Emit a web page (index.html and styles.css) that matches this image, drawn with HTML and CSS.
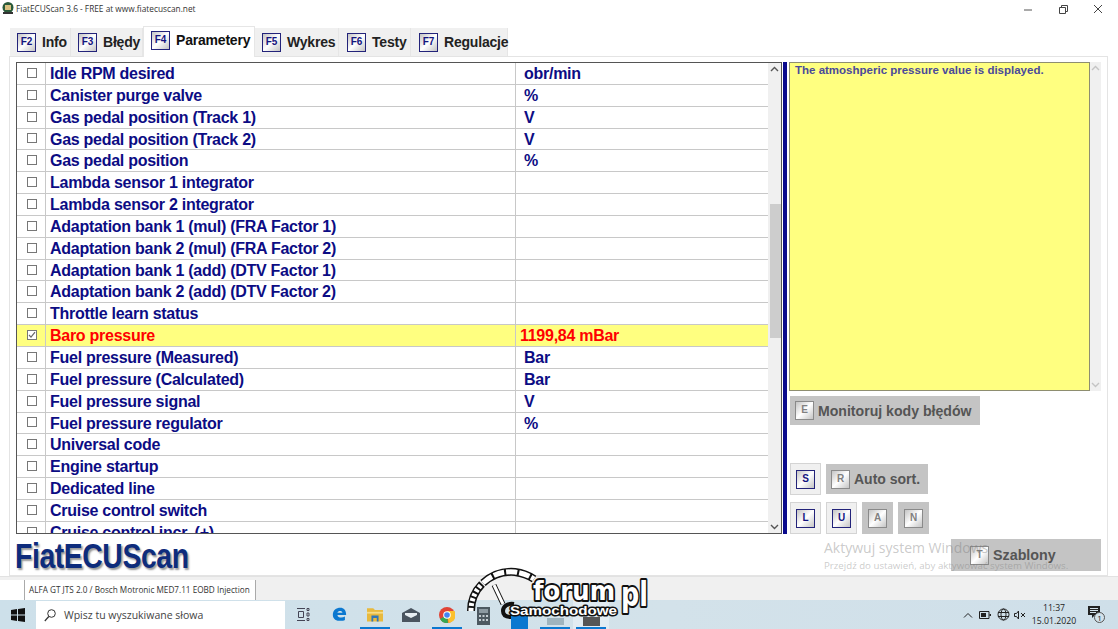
FILE: index.html
```html
<!DOCTYPE html>
<html lang="pl">
<head>
<meta charset="utf-8">
<title>FiatECUScan</title>
<link rel="stylesheet" href="styles.css">
</head>
<body>
<div class="window">
  <header class="titlebar">
    <svg class="appicon" width="12" height="12" viewBox="0 0 12 12"><circle cx="6" cy="5.500" r="5.500" fill="#2a5a3a"/><path d="M3 3h6v5H3z" fill="#d8c080"/><path d="M1 10h10v2H1z" fill="#333"/></svg>
    <span class="apptitle">FiatECUScan 3.6 - FREE at www.fiatecuscan.net</span>
    <div class="winctl">
      <svg width="11" height="11" viewBox="0 0 11 11"><path d="M1 6h8" stroke="#555" fill="none"/></svg>
      <svg width="11" height="11" viewBox="0 0 11 11"><path d="M1.500 3.500h6v6h-6zM3.500 3.500v-2h6v6h-2" stroke="#444" fill="none"/></svg>
      <svg width="11" height="11" viewBox="0 0 11 11"><path d="M1 1l8 8M9 1l-8 8" stroke="#444" fill="none"/></svg>
    </div>
  </header>

  <nav class="tabs">
    <div class="tab tab-info"><span class="key">F2</span>Info</div>
    <div class="tab tab-bledy"><span class="key">F3</span>Błędy</div>
    <div class="tab tab-active"><span class="key">F4</span>Parametery</div>
    <div class="tab tab-wykres"><span class="key">F5</span>Wykres</div>
    <div class="tab tab-testy"><span class="key">F6</span>Testy</div>
    <div class="tab tab-reg"><span class="key">F7</span>Regulacje</div>
  </nav>

  <main class="panel">
    <div class="left">
      <div class="table">
        <div class="rows">
          <div class="row"><span class="ck"><i class="box"></i></span><span class="nm">Idle RPM desired</span><span class="val">obr/min</span></div>
          <div class="row"><span class="ck"><i class="box"></i></span><span class="nm">Canister purge valve</span><span class="val">%</span></div>
          <div class="row"><span class="ck"><i class="box"></i></span><span class="nm">Gas pedal position (Track 1)</span><span class="val">V</span></div>
          <div class="row"><span class="ck"><i class="box"></i></span><span class="nm">Gas pedal position (Track 2)</span><span class="val">V</span></div>
          <div class="row"><span class="ck"><i class="box"></i></span><span class="nm">Gas pedal position</span><span class="val">%</span></div>
          <div class="row"><span class="ck"><i class="box"></i></span><span class="nm">Lambda sensor 1 integrator</span><span class="val"></span></div>
          <div class="row"><span class="ck"><i class="box"></i></span><span class="nm">Lambda sensor 2 integrator</span><span class="val"></span></div>
          <div class="row"><span class="ck"><i class="box"></i></span><span class="nm">Adaptation bank 1 (mul) (FRA Factor 1)</span><span class="val"></span></div>
          <div class="row"><span class="ck"><i class="box"></i></span><span class="nm">Adaptation bank 2 (mul) (FRA Factor 2)</span><span class="val"></span></div>
          <div class="row"><span class="ck"><i class="box"></i></span><span class="nm">Adaptation bank 1 (add) (DTV Factor 1)</span><span class="val"></span></div>
          <div class="row"><span class="ck"><i class="box"></i></span><span class="nm">Adaptation bank 2 (add) (DTV Factor 2)</span><span class="val"></span></div>
          <div class="row"><span class="ck"><i class="box"></i></span><span class="nm">Throttle learn status</span><span class="val"></span></div>
          <div class="row row-sel"><span class="ck"><i class="box box-on"><svg width="8" height="8" viewBox="0 0 8 8"><path d="M1 4l2 2.200 4-5" stroke="#666" stroke-width="1.200" fill="none"/></svg></i></span><span class="nm">Baro pressure</span><span class="val val-sel">1199,84 mBar</span></div>
          <div class="row"><span class="ck"><i class="box"></i></span><span class="nm">Fuel pressure (Measured)</span><span class="val">Bar</span></div>
          <div class="row"><span class="ck"><i class="box"></i></span><span class="nm">Fuel pressure (Calculated)</span><span class="val">Bar</span></div>
          <div class="row"><span class="ck"><i class="box"></i></span><span class="nm">Fuel pressure signal</span><span class="val">V</span></div>
          <div class="row"><span class="ck"><i class="box"></i></span><span class="nm">Fuel pressure regulator</span><span class="val">%</span></div>
          <div class="row"><span class="ck"><i class="box"></i></span><span class="nm">Universal code</span><span class="val"></span></div>
          <div class="row"><span class="ck"><i class="box"></i></span><span class="nm">Engine startup</span><span class="val"></span></div>
          <div class="row"><span class="ck"><i class="box"></i></span><span class="nm">Dedicated line</span><span class="val"></span></div>
          <div class="row"><span class="ck"><i class="box"></i></span><span class="nm">Cruise control switch</span><span class="val"></span></div>
          <div class="row"><span class="ck"><i class="box"></i></span><span class="nm">Cruise control incr. (+)</span><span class="val"></span></div>
        </div>
        <div class="scroll">
          <svg class="arrow" width="9" height="6" viewBox="0 0 9 6"><path d="M1 5l3.500-3.500L8 5" stroke="#555" stroke-width="1.400" fill="none"/></svg>
          <div class="track"><div class="thumb"></div></div>
          <svg class="arrow" width="9" height="6" viewBox="0 0 9 6"><path d="M1 1l3.500 3.500L8 1" stroke="#555" stroke-width="1.400" fill="none"/></svg>
        </div>
      </div>
      <div class="logo"><span class="logotext">FiatECUScan</span></div>
    </div>

    <div class="divider"></div>

    <aside class="right">
      <div class="descwrap">
        <div class="desc">The atmoshperic pressure value is displayed.</div>
        <div class="descscroll">
          <svg width="9" height="6" viewBox="0 0 9 6"><path d="M1 5l3.500-3.500L8 5" stroke="#c4c4c4" stroke-width="1.400" fill="none"/></svg>
          <svg width="9" height="6" viewBox="0 0 9 6"><path d="M1 1l3.500 3.500L8 1" stroke="#c4c4c4" stroke-width="1.400" fill="none"/></svg>
        </div>
      </div>
      <div class="btn btn-mon"><span class="key key-off">E</span>Monitoruj kody błędów</div>
      <div class="tools">
        <div class="toolrow">
          <div class="sq sq-on"><span class="key">S</span></div>
          <div class="btn btn-auto"><span class="key key-off">R</span>Auto sort.</div>
        </div>
        <div class="toolrow">
          <div class="sq sq-on"><span class="key">L</span></div>
          <div class="sq sq-on"><span class="key">U</span></div>
          <div class="sq"><span class="key key-off">A</span></div>
          <div class="sq"><span class="key key-off">N</span></div>
        </div>
      </div>
      <div class="btn btn-szab"><span class="key key-off">T</span>Szablony</div>
    </aside>
  </main>

  <footer class="status">
    <div class="stat-empty"></div>
    <div class="stat-text">ALFA GT JTS 2.0 / Bosch Motronic MED7.11 EOBD Injection</div>
  </footer>

  <div class="taskbar">
    <svg class="winlogo" width="14" height="14" viewBox="0 0 14 14"><path d="M0 2l6-1v5.500H0zM7 .9L14 0v6.500H7zM0 7.500h6V13l-6-1zM7 7.500h7V14l-7-1z" fill="#111"/></svg>
    <div class="search">
      <svg width="12" height="13" viewBox="0 0 12 13"><circle cx="7.500" cy="4.500" r="3.800" stroke="#333" fill="none"/><path d="M4.800 7.500L.8 12" stroke="#333" stroke-width="1.200"/></svg>
      <span>Wpisz tu wyszukiwane słowa</span>
    </div>
    <div class="taskicons">
      <div class="ti"><svg width="13" height="13" viewBox="0 0 13 13"><path d="M0 .5h8M0 12.500h8M1.500 3.500h5v6h-5zM10 .5h2v2h-2zM10 5h2v3h-2zM10 10.500h2v2h-2z" stroke="#445" fill="none"/></svg></div>
      <div class="ti"><svg width="15" height="15" viewBox="0 0 18 18"><path d="M1 9.500C1 4 5 1 10 1c4 0 7 3 7 8.500H6.500c.3 3.500 5.500 4 9 2v4c-4 2-14.500 2-14.500-6zM6.500 7h6c0-3-5.500-3-6 0z" fill="#0b78d0"/></svg></div>
      <div class="ti ti-run"><svg width="16" height="15" viewBox="0 0 18 16"><path d="M0 1h7l2 2h9v13H0z" fill="#e8b93e"/><path d="M0 5h18v2H0z" fill="#f6dc88"/><path d="M5 9h8v7h-2v-4H7v4H5z" fill="#2f76b8"/></svg></div>
      <div class="ti"><svg width="18" height="14" viewBox="0 0 18 14"><path d="M0 5L9 0l9 5v9H0z" fill="#4a5560"/><path d="M3 5h12v2L9 10 3 7z" fill="#e7eef2"/></svg></div>
      <div class="ti ti-run"><svg width="16" height="16" viewBox="0 0 16 16"><circle cx="8" cy="8" r="8" fill="#e04436"/><path d="M8 8L1 12a8 8 0 0 0 8 4z" fill="#35a853"/><path d="M8 4h7.500a8 8 0 0 1-6 12z" fill="#fbc02d"/><circle cx="8" cy="8" r="3.800" fill="#fff"/><circle cx="8" cy="8" r="2.800" fill="#4285f4"/></svg></div>
      <div class="ti"><svg class="calc" width="13" height="18" viewBox="0 0 13 18"><path d="M0 0h13v18H0z" fill="#4d5961"/><path d="M2 2h9v4H2z" fill="#8d9aa2"/><path d="M2 8h2v2H2zM5.500 8h2v2h-2zM9 8h2v2H9zM2 12h2v2H2zM5.500 12h2v2h-2zM9 12h2v2H9z" fill="#c5ced3"/></svg></div>
      <div class="ti"><div class="tile"></div></div>
      <div class="ti ti-run"><div class="tile tile-b"></div></div>
      <div class="ti ti-run ti-act"><div class="tile tile-c"></div></div>
    </div>
    <div class="tray">
      <svg width="10" height="6" viewBox="0 0 10 6"><path d="M1 5.500l4-4 4 4" stroke="#222" fill="none"/></svg>
      <svg width="12" height="8" viewBox="0 0 12 8"><path d="M.5.500h9.500v7H.5z" stroke="#222" fill="none"/><path d="M2 2h5v4H2z" fill="#222"/><path d="M10.500 3h1.500v2h-1.500z" fill="#222"/></svg>
      <svg width="13" height="13" viewBox="0 0 13 13"><circle cx="6.500" cy="6.500" r="5.500" stroke="#222" fill="none"/><ellipse cx="6.500" cy="6.500" rx="2.500" ry="5.500" stroke="#222" fill="none"/><path d="M1 4.500h11M1 8.500h11" stroke="#222"/></svg>
      <svg class="t-spk" width="12" height="10" viewBox="0 0 12 10"><path d="M.5 3.500h2l2-2.500v8l-2-2.500h-2z" stroke="#222" fill="none"/><path d="M7 3l4 4M11 3L7 7" stroke="#222"/></svg>
      <div class="clock"><span>11:37</span><span>15.01.2020</span></div>
      <div class="notif">
        <svg width="13" height="13" viewBox="0 0 13 13"><path d="M0 0h12v9H7l-3 3V9H0z" fill="#222"/><path d="M2 2.500h8M2 4.500h8M2 6.500h6" stroke="#d3e1ea"/></svg>
        <span class="badge">1</span>
      </div>
    </div>
  </div>

  <svg class="forumlogo" width="190" height="56" viewBox="0 0 190 56">
    <path class="arc-o" d="M6 47C6 36 10 27 17 20"/>
    <path class="arc-o" d="M18 19C28 10 38 7 50 8c7 1 13 3 19 7"/>
    <path class="arc-ti" d="M6 47C6 36 10 27 17 20"/>
    <path class="arc-i" d="M18 19C28 10 38 7 50 8c7 1 13 3 19 7"/>
    <path class="needle-o" d="M29 21L38 40"/>
    <path class="needle-i" d="M29 21L38 40"/>
    <path class="ring" d="M49 40c-6-1-11 2-11 7s4 6 8 6"/>
    <text class="forum" x="68" y="36" textLength="82" lengthAdjust="spacingAndGlyphs">forum</text>
    <text class="pl" x="156" y="42" textLength="27" lengthAdjust="spacingAndGlyphs">pl</text>
    <text class="samo" x="45" y="51" textLength="107" lengthAdjust="spacingAndGlyphs">Samochodowe</text>
  </svg>

  <div class="activate">
    <div class="act1">Aktywuj system Windows</div>
    <div class="act2">Przejdź do ustawień, aby aktywować system Windows.</div>
  </div>
</div>
</body>
</html>
```

FILE: styles.css
```css
* { box-sizing: border-box; }
html, body { margin: 0; padding: 0; }
body { width: 1118px; height: 629px; overflow: hidden; background: #fff; font-family: "Liberation Sans", Arial, sans-serif; }
.window { position: relative; width: 1118px; height: 629px; display: flex; flex-direction: column; }

.titlebar { height: 26px; flex: none; display: flex; align-items: flex-start; padding: 2px 0 0 2px; }
.appicon { flex: none; }
.apptitle { font-family: "Open Sans", sans-serif; font-size: 8.300px; line-height: 13px; margin-left: 2px; color: #333; }
.winctl { margin-left: auto; display: flex; gap: 24px; padding: 2px 14px 0 0; }

.tabs { height: 30px; flex: none; display: flex; padding-left: 10px; align-items: flex-end; }
.tab { height: 28px; display: flex; align-items: center; background: #f0f0f0; border-right: 1px solid #e6e6e6; font-size: 14px; letter-spacing: -.2px; font-weight: bold; color: #222; padding-left: 7px; gap: 6px; }
.tab .key { width: 19px; height: 19px; letter-spacing: 0; }
.tab-info { width: 61px; }
.tab-bledy { width: 72px; }
.tab-active { width: 112px; height: 31px; background: #fff; border: 1px solid #e6e6e6; border-bottom: 0; align-items: flex-start; padding-top: 4px; z-index: 1; margin-bottom: -1px; color: #111; line-height: 18px; }
.tab-wykres { width: 84px; }
.tab-testy { width: 72px; padding-left: 8px; }
.tab-reg { width: 97px; padding-left: 8px; }

.key { display: inline-flex; align-items: center; justify-content: center; flex: none; border: 1px solid #23237a; background: linear-gradient(135deg, #c4c4c4 0%, #fff 50%, #c4c4c4 100%); font-size: 10px; font-weight: bold; color: #14147f; font-family: "Liberation Sans", sans-serif; padding-bottom: 2px; }
.key-off { border-color: #8a8a8a; color: #808080; }

.panel { height: 520px; flex: none; margin-left: 9px; width: 1099px; border: 1px solid #e4e4e4; display: flex; padding: 5px 0 0 6px; background: #fff; }
.left { width: 765px; flex: none; display: flex; flex-direction: column; }
.table { width: 766px; height: 472px; flex: none; display: flex; border: 1px solid #555; overflow: hidden; }
.rows { width: 751px; flex: none; }
.row { height: 21.850px; display: flex; border-bottom: 1px solid #c8c8c8; font-size: 16px; letter-spacing: -.27px; font-weight: bold; color: #0c0c84; line-height: 22px; }
.ck { width: 29px; flex: none; display: flex; align-items: center; justify-content: center; border-right: 1px solid #c8c8c8; padding-left: 1px; }
.box { width: 10px; height: 10px; border: 1px solid #777; background: #fff; display: flex; align-items: center; justify-content: center; margin-top: -1px; }
.nm { width: 470px; flex: none; padding-left: 4px; border-right: 1px solid #c8c8c8; white-space: nowrap; }
.val { padding-left: 8px; white-space: nowrap; }
.row-sel { background: #ffff80; color: #ff0000; }
.val-sel { padding-left: 4px; }
.scroll { width: 13px; flex: none; background: #f0f0f0; display: flex; flex-direction: column; align-items: center; padding: 3px 0; }
.arrow { flex: none; }
.track { flex: 1; width: 100%; padding: 132px 0 0 2px; }
.thumb { height: 134px; background: #cdcdcd; }

.logo { height: 41px; font-size: 35px; font-weight: bold; line-height: 44px; color: #0e2c7c; white-space: nowrap; margin-left: -1px; }
.logotext { display: inline-block; letter-spacing: -.5px; text-shadow: 2px 2px 2px #9a9a9a; transform: scaleX(.81); transform-origin: left center; }

.divider { width: 4px; height: 472px; flex: none; background: #0a0a8c; margin-left: 2px; }

.right { position: relative; flex: 1; padding-left: 1px; min-width: 0; display: flex; flex-direction: column; }
.descwrap { display: flex; height: 329px; flex: none; margin-left: 1px; }
.desc { width: 301px; background: #ffff80; border: 1px solid #8e8e70; font-size: 11.500px; line-height: 13px; font-weight: bold; color: #4a4a9a; padding: 1px 5px; }
.descscroll { width: 11px; background: #f0f0f0; display: flex; flex-direction: column; justify-content: space-between; align-items: center; padding: 3px 0; }

.btn { display: flex; align-items: center; background: #c4c4c4; font-weight: bold; color: #555; }
.btn .key { width: 19px; height: 19px; }
.btn-mon { width: 190px; height: 29px; margin: 5px 0 0 2px; padding-left: 5px; gap: 4px; font-size: 14.100px; }
.tools { margin: 38px 0 0 2px; display: flex; flex-direction: column; gap: 7px; }
.toolrow { display: flex; gap: 5px; align-items: center; }
.sq { width: 31px; height: 32px; background: #c4c4c4; display: flex; align-items: center; justify-content: center; }
.sq .key { width: 19px; height: 19px; }
.sq-on { background: #f0f0f0; border: 1px solid #d4d4d4; }
.btn-auto { width: 102px; height: 30px; padding-left: 5px; gap: 4px; font-size: 14px; }
.btn-szab { position: absolute; left: 164px; top: 477px; width: 150px; height: 32px; padding-left: 19px; gap: 4px; font-size: 14.300px; }

.status { height: 24px; flex: none; background: #f0f0f0; display: flex; border-top: 1px solid #e2e2e2; padding-top: 3px; }
.stat-empty { width: 25px; flex: none; height: 20px; background: #fff; border-right: 1px solid #aaa; }
.stat-text { width: 231px; height: 20px; background: #fff; border-right: 1px solid #aaa; font-family: "Open Sans", sans-serif; font-size: 8.200px; line-height: 20px; padding-left: 4px; color: #333; white-space: nowrap; overflow: hidden; }

.taskbar { flex: 1; background: linear-gradient(90deg, #cde0ea 0%, #d3e2ea 60%, #cfdfe9 100%); display: flex; align-items: stretch; }
.winlogo { margin: 8px 0 0 11px; flex: none; }
.search { width: 249px; margin-left: 11px; background: #fff; display: flex; align-items: center; gap: 8px; padding-left: 8px; margin-top: 1px; font-family: "Open Sans", sans-serif; font-size: 10.500px; color: #444; flex: none; }
.taskicons { display: flex; margin-left: 0; }
.ti { width: 36px; display: flex; align-items: center; justify-content: center; position: relative; }
.ti-run::after { content: ""; position: absolute; left: 3px; right: 3px; bottom: 0; height: 2px; background: #0b78d0; }
.ti-act { background: #e2ecf2; }
.calc { margin-top: 2px; }
.tile { width: 17px; height: 14px; background: #0b78d0; margin-top: 14px; }
.tile-b { background: #9fb4be; height: 7px; }
.tile-c { background: #555; height: 9px; }
.tray { margin-left: auto; display: flex; align-items: center; gap: 6px; padding-right: 6px; }
.t-spk { margin-left: -2px; }
.clock { width: 40px; display: flex; flex-direction: column; align-items: center; font-family: "Open Sans", sans-serif; font-size: 8.700px; line-height: 13px; color: #222; margin-left: 2px; white-space: nowrap; }
.notif { position: relative; width: 24px; height: 20px; margin-left: 8px; }
.badge { position: absolute; left: 6px; top: 7px; width: 11px; height: 11px; border-radius: 50%; border: 1px solid #555; background: #d3e1ea; font-family: "Open Sans", sans-serif; font-size: 8px; line-height: 9px; text-align: center; color: #222; }

.forumlogo { position: absolute; left: 465px; top: 564px; }
.arc-o { fill: none; stroke: #111; stroke-width: 8; }
.arc-i { fill: none; stroke: #fff; stroke-width: 5; stroke-dasharray: 11 2; }
.arc-ti { fill: none; stroke: #fff; stroke-width: 5; stroke-dasharray: 3 2; }
.needle-o { fill: none; stroke: #111; stroke-width: 5; }
.needle-i { fill: none; stroke: #fff; stroke-width: 3; }
.ring { fill: none; stroke: #111; stroke-width: 4; }
.forum, .pl { font-family: "DejaVu Sans", sans-serif; font-weight: bold; font-size: 27px; fill: #fff; stroke: #111; stroke-width: 4px; stroke-linejoin: round; paint-order: stroke; }
.pl { font-size: 34px; }
.samo { font-family: "Liberation Sans", sans-serif; font-weight: bold; font-size: 13.500px; fill: #fff; stroke: #111; stroke-width: 3px; stroke-linejoin: round; paint-order: stroke; }

.activate { position: absolute; left: 824px; top: 539px; color: rgba(120, 120, 120, .4); font-family: "Open Sans", sans-serif; pointer-events: none; white-space: nowrap; }
.act1 { font-size: 14px; line-height: 18px; }
.act2 { font-size: 9.700px; line-height: 15px; margin-top: 1px; }
```
